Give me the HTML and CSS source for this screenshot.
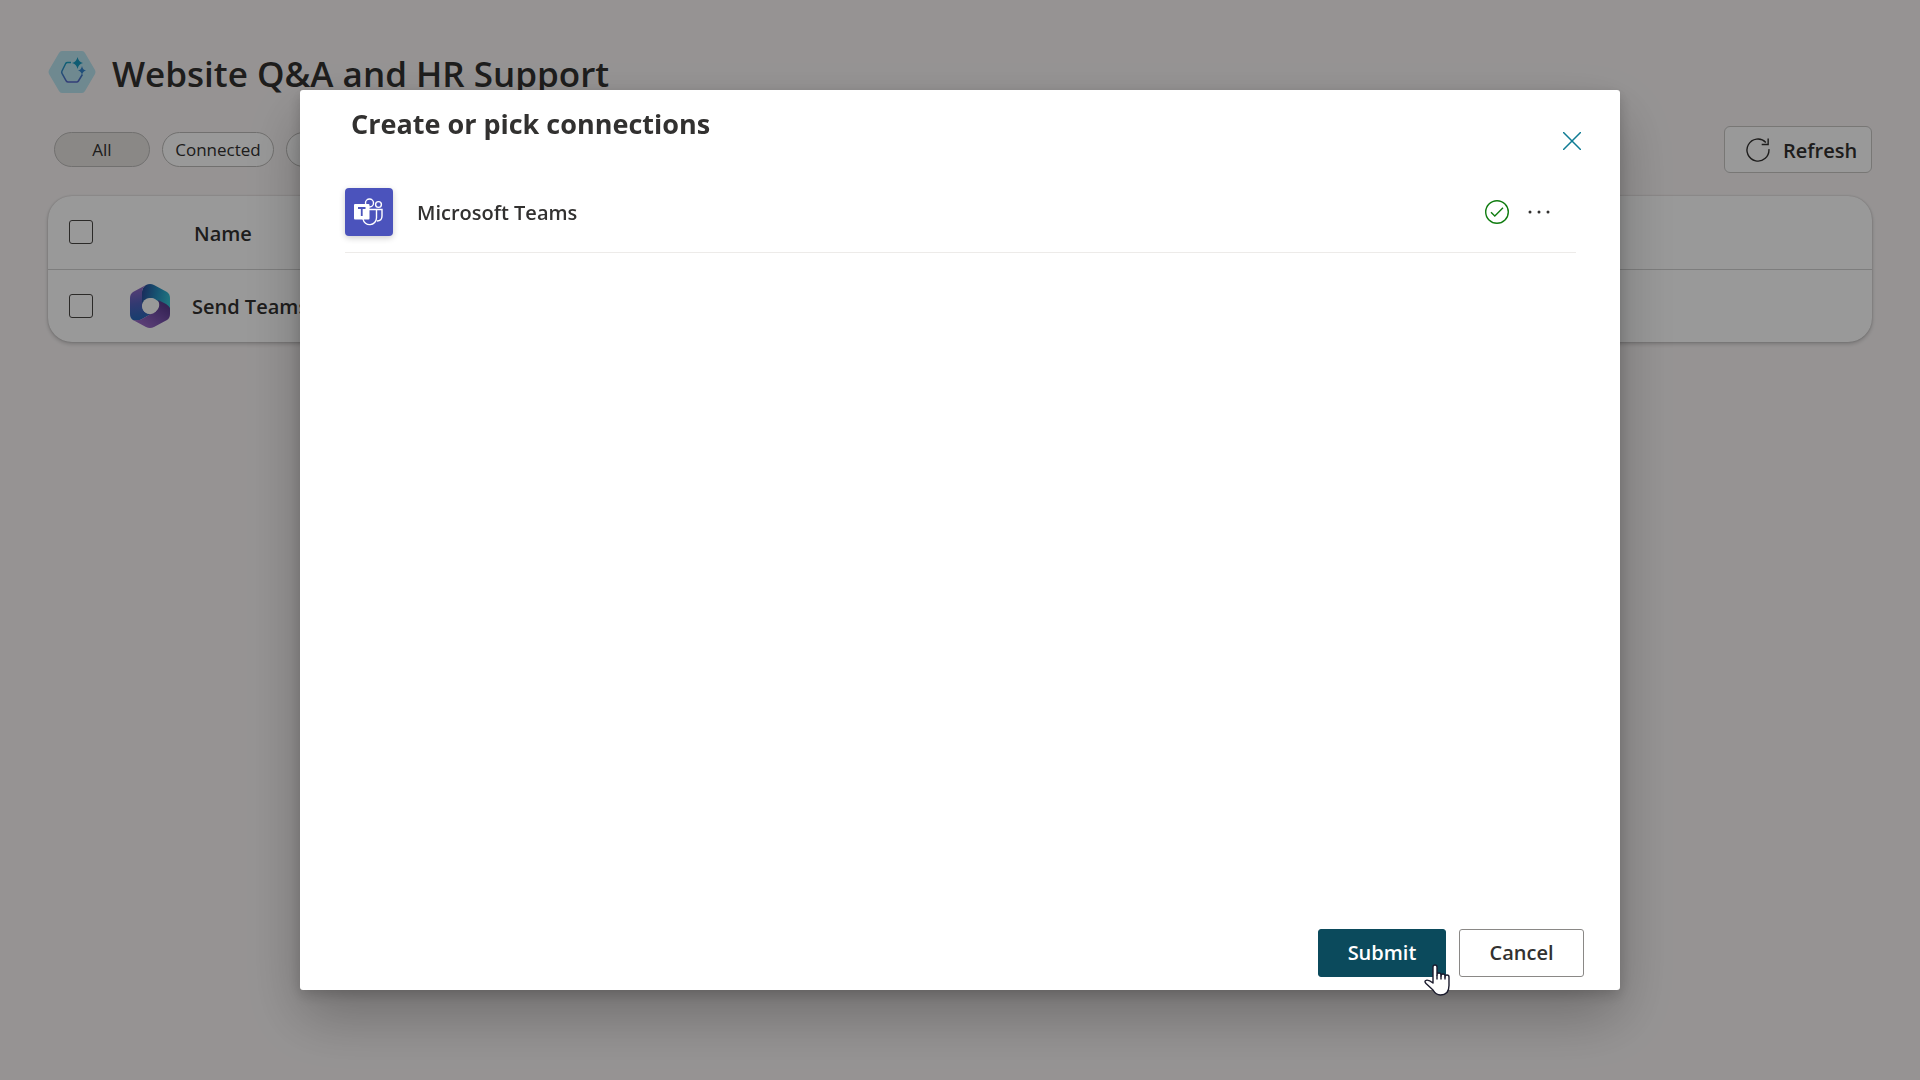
FILE: index.html
```html
<!DOCTYPE html>
<html lang="en">
<head>
<meta charset="utf-8">
<meta name="viewport" content="width=device-width, initial-scale=1">
<title>Website Q&amp;A and HR Support</title>
<link rel="stylesheet" href="styles.css">
</head>
<body>
<main class="page">
  <header class="page-header">
    <svg class="agent-icon" viewBox="0 0 48 44" aria-hidden="true">
      <defs>
        <linearGradient id="agentStroke" x1="0" y1="0" x2="0" y2="1">
          <stop offset="0" stop-color="#18a0c4"/><stop offset="1" stop-color="#5668c8"/>
        </linearGradient>
      </defs>
      <path d="M14 1h20q2 0 3 2l10 17q1 2 0 4L37 41q-1 2-3 2H14q-2 0-3-2L1 24q-1-2 0-4L11 3q1-2 3-2z" fill="#b9e4f0"/>
      <path d="M23 12.500h-3.500q-1.200 0-1.800 1L14 21q-.6 1.200 0 2.400l4.300 7.600q.6 1 1.800 1h8.500q1.200 0 1.800-1l4-6.500" fill="none" stroke="url(#agentStroke)" stroke-width="1.500"/>
      <path d="M29.500 7q1 5 5.500 6-4.500 1-5.500 6-1-5-5.500-6 4.500-1 5.500-6z" fill="#189ac0"/>
      <path d="M34 16q.8 4 4 4.500-3.200.5-4 4.500-.8-4-4-4.500 3.200-.5 4-4.500z" fill="#3584cc"/>
    </svg>
    <h1 class="page-title">Website Q&amp;A and HR Support</h1>
  </header>

  <div class="toolbar">
    <div class="filters">
      <button class="pill pill-selected" type="button">All</button>
      <button class="pill pill-wide" type="button">Connected</button>
      <button class="pill pill-wide" type="button" aria-label="Filter"></button>
    </div>
    <button class="refresh" type="button">
      <svg class="refresh-icon" viewBox="0 0 26 26" aria-hidden="true">
        <path d="M24.800 12A11.900 11.900 0 1 1 21.500 4.800M24 .5v6.500H17" fill="none" stroke="currentColor" stroke-width="1.500"/>
      </svg>
      <span class="refresh-label">Refresh</span>
    </button>
  </div>

  <div class="card">
    <table class="connections">
      <thead>
        <tr>
          <th class="cell-check"><input class="check" type="checkbox" aria-label="Select all"></th>
          <th class="cell-logo"></th>
          <th class="cell-name cell-heading" scope="col">Name</th>
        </tr>
      </thead>
      <tbody>
        <tr>
          <td class="cell-check"><input class="check" type="checkbox" aria-label="Select Send Teams"></td>
          <td class="cell-logo">
            <svg class="m365" viewBox="0 0 40 44" aria-hidden="true">
              <defs>
                <linearGradient id="top365" x1="0" y1=".5" x2="1" y2=".7">
                  <stop offset="0" stop-color="#2a4f9c"/><stop offset=".5" stop-color="#268fc0"/><stop offset="1" stop-color="#38c6d6"/>
                </linearGradient>
                <linearGradient id="left365" x1=".4" y1="0" x2=".5" y2="1">
                  <stop offset="0" stop-color="#9a6ac4"/><stop offset=".5" stop-color="#5461bd"/><stop offset="1" stop-color="#2368b8"/>
                </linearGradient>
                <linearGradient id="low365" x1="1" y1="0" x2="0" y2="1">
                  <stop offset="0" stop-color="#4b3080"/><stop offset=".5" stop-color="#7a53ae"/><stop offset="1" stop-color="#a875d2"/>
                </linearGradient>
              </defs>
              <path d="M16 1q4-2 8 0l13 7q3 2 3 6v12L25 15q-5-3-10 2l-3 4V8q0-4 4-7z" fill="url(#top365)"/>
              <path d="M16 1 3 8q-3 2-3 6v16q0 4 3 6 5 2 9-1l9-5q-8 0-9-8V8q0-4 4-7z" fill="url(#left365)"/>
              <path d="M40 24v6q0 4-3 6l-13 7q-4 2-8 0L3 36q5 1 9-1l14-8q4-3 3-8l-1-3 8 4q3 2 4 4z" fill="url(#low365)"/>
              <circle cx="20" cy="22" r="8" fill="#fff"/>
            </svg>
          </td>
          <td class="cell-name">Send Teams</td>
        </tr>
      </tbody>
    </table>
  </div>
</main>

<div class="overlay">
  <section class="dialog" role="dialog" aria-modal="true" aria-labelledby="dialog-title">
    <header class="dialog-header">
      <h2 class="dialog-title" id="dialog-title">Create or pick connections</h2>
      <button class="close" type="button" aria-label="Close">
        <svg class="close-icon" viewBox="0 0 18 18" aria-hidden="true">
          <path d="M0 0 18 18M18 0 0 18" stroke="currentColor" stroke-width="1.500"/>
        </svg>
      </button>
    </header>

    <div class="connection">
      <span class="teams-tile">
        <svg class="teams-icon" viewBox="0 0 48 48" aria-hidden="true">
          <g fill="none" stroke="#fff" stroke-width="1.400">
            <circle cx="24.500" cy="15" r="4"/>
            <circle cx="33.500" cy="16.500" r="2.900"/>
            <path d="M23 21.500h14v6.500q0 5-5 5"/>
            <path d="M31.500 21.500v8.500a6.800 6.800 0 0 1-13.500 1"/>
          </g>
          <rect x="9" y="16" width="15.500" height="15.500" rx="1" fill="#fff"/>
          <path d="M13 20h7.500M16.750 20v8" stroke="#4b53bc" stroke-width="1.800"/>
        </svg>
      </span>
      <span class="connection-name">Microsoft Teams</span>
      <svg class="status-icon" viewBox="0 0 24 24" role="img" aria-label="Connected">
        <circle cx="12" cy="12" r="11.300" fill="none" stroke="#107c10" stroke-width="1.400"/>
        <path d="M6 12.300 9.800 16 18 7.800" fill="none" stroke="#107c10" stroke-width="1.400"/>
      </svg>
      <button class="more" type="button" aria-label="More options">
        <svg class="more-icon" viewBox="0 0 22 4" aria-hidden="true">
          <g fill="currentColor"><circle cx="2" cy="2" r="1.500"/><circle cx="11" cy="2" r="1.500"/><circle cx="20" cy="2" r="1.500"/></g>
        </svg>
      </button>
    </div>

    <footer class="dialog-footer">
      <button class="button button-primary" type="button">Submit
        <svg class="pointer" viewBox="0 0 26 32" aria-hidden="true">
          <path d="M9 18.500V3q0-2 2-2t2 2v8q0-2 2-2t2 2v1q0-2 2-2t2 2v1q0-2 2-2t2 2v8.500q0 9.500-8.500 9.500-4.500 0-7.500-5L2 19.500q-2-2.500 0-3.200 2.500-1 7 2.700z" fill="#fff" stroke="#1a1a2c" stroke-width="1.400" stroke-linejoin="round"/>
          <path d="M13 11v4.500M17 11.500v4M21 12.500v3" stroke="#1a1a2c" stroke-width="1.400"/>
        </svg>
      </button>
      <button class="button" type="button">Cancel</button>
    </footer>
  </section>
</div>
</body>
</html>
```
FILE: styles.css
```css
* {
  box-sizing: border-box;
}

body {
  margin: 0;
  min-height: 100vh;
  background: #faf6f6;
  color: #323130;
  font-family: "Open Sans", "Noto Sans", sans-serif;
  font-size: 20px;
  line-height: 28px;
}

button {
  margin: 0;
  padding: 0;
  border: 0;
  background: none;
  color: inherit;
  font: inherit;
}

svg {
  display: block;
}

.page {
  padding: 48px;
}

.page-header {
  display: flex;
  align-items: center;
  gap: 16px;
  height: 48px;
}

.agent-icon {
  width: 48px;
  height: 44px;
}

.page-title {
  margin: 0;
  padding-top: 4px;
  font-size: 35px;
  font-weight: 550;
  line-height: 48px;
}

.toolbar {
  display: flex;
  align-items: center;
  justify-content: space-between;
  margin-top: 30px;
}

.filters {
  display: flex;
  gap: 12px;
  padding-left: 6px;
}

.pill {
  width: 96px;
  height: 35px;
  border: 1px solid #bdbbb9;
  border-radius: 18px;
  background: #fff;
  font-size: 17px;
}

.pill-wide {
  width: 112px;
}

.pill-selected {
  background: #e6e3e0;
}

.refresh {
  display: flex;
  align-items: center;
  gap: 13px;
  width: 148px;
  height: 47px;
  padding-left: 21px;
  border: 1px solid #c8c6c4;
  border-radius: 6px;
  background: #fff;
  font-weight: 550;
}

.refresh-icon {
  width: 24px;
  height: 24px;
}

.refresh-label {
  padding-top: 2px;
}

.card {
  margin-top: 23px;
  overflow: hidden;
  border-radius: 24px;
  background: #fff;
  box-shadow: 0 0 2px rgba(0, 0, 0, 0.2), 0 2px 4px rgba(0, 0, 0, 0.2);
}

.connections {
  width: 100%;
  border-collapse: collapse;
  table-layout: fixed;
}

.connections th,
.connections td {
  height: 73px;
  padding: 0;
  font-weight: 550;
  text-align: left;
  vertical-align: middle;
}

.connections thead {
  border-bottom: 1px solid #d1d1d1;
}

.connections .cell-check {
  width: 82px;
  padding-left: 21px;
}

.connections .cell-logo {
  width: 62px;
}

.connections .cell-name {
  padding-top: 3px;
}

.connections .cell-heading {
  padding-left: 2px;
}

.check {
  display: block;
  width: 24px;
  height: 24px;
  margin: 0;
  border: 1px solid #484644;
  border-radius: 3px;
  appearance: none;
}

.m365 {
  width: 40px;
  height: 44px;
}

.overlay {
  position: fixed;
  inset: 0;
  display: flex;
  align-items: center;
  justify-content: center;
  padding: 32px;
  background: rgba(0, 0, 0, 0.4);
}

.dialog {
  display: flex;
  flex-direction: column;
  width: 100%;
  max-width: 1320px;
  height: 100%;
  max-height: 900px;
  padding: 12px 36px 13px 45px;
  border-radius: 3px;
  background: #fff;
  box-shadow: 0 26px 58px rgba(0, 0, 0, 0.26), 0 5px 14px rgba(0, 0, 0, 0.18);
}

.dialog-header {
  display: flex;
  align-items: flex-start;
  justify-content: space-between;
  padding-left: 6px;
}

.dialog-title {
  margin: 4px 0 0;
  font-size: 27px;
  font-weight: 700;
  line-height: 36px;
}

.close {
  display: flex;
  align-items: center;
  justify-content: center;
  width: 24px;
  height: 78px;
  color: #0f7c94;
}

.close-icon {
  width: 18px;
  height: 18px;
}

.connection {
  display: flex;
  align-items: center;
  height: 73px;
  margin-right: 8px;
  padding: 0 25px 8px 0;
  border-bottom: 1px solid #edebe9;
}

.teams-tile {
  width: 48px;
  height: 48px;
  border-radius: 4px;
  background: #4b53bc;
  box-shadow: 0 2px 6px rgba(0, 0, 0, 0.2);
}

.connection-name {
  flex: 1;
  margin-left: 24px;
  padding-top: 2px;
  font-weight: 550;
}

.status-icon {
  width: 24px;
  height: 24px;
}

.more {
  display: flex;
  align-items: center;
  justify-content: center;
  width: 24px;
  height: 32px;
  margin-left: 18px;
}

.more-icon {
  width: 22px;
  height: 4px;
}

.dialog-footer {
  display: flex;
  justify-content: flex-end;
  gap: 13px;
  margin-top: auto;
}

.button {
  position: relative;
  width: 125px;
  height: 48px;
  border: 1px solid #8a8886;
  border-radius: 3px;
  background: #fff;
  font-weight: 550;
}

.button-primary {
  width: 128px;
  border-color: #0b4a5c;
  background: #0b4a5c;
  color: #fff;
  font-weight: 600;
}

.pointer {
  position: absolute;
  right: -5px;
  bottom: -20px;
  width: 26px;
  height: 32px;
}
```
